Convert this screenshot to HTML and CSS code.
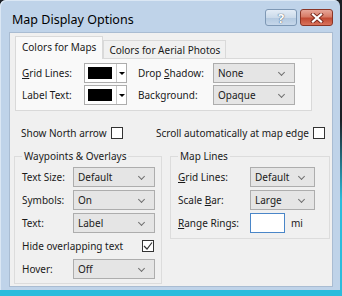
FILE: index.html
```html
<!DOCTYPE html>
<html lang="en">
<head>
  <meta charset="UTF-8">
  <title>Map Display Options</title>
  <link rel="stylesheet" href="styles.css">
</head>
<body>
  <div class="window">
    <!-- Caption bar -->
    <div class="titlebar">
      <span class="title">Map Display Options</span>
      <div class="caption-btns">
        <div class="cap-btn help">?</div>
        <div class="cap-btn close">
          <svg width="14" height="10" viewBox="0 0 14 10">
            <path d="M3 1.5 L11 8.5 M11 1.5 L3 8.5" stroke="#7a2a1e" stroke-width="4" stroke-linecap="square"/>
            <path d="M3 1.5 L11 8.5 M11 1.5 L3 8.5" stroke="#fff" stroke-width="2.2" stroke-linecap="square"/>
          </svg>
        </div>
      </div>
    </div>

    <div class="client">
      <!-- Tabs -->
      <div class="tabs">
        <div class="tab active">Colors for Maps</div>
        <div class="tab">Colors for Aerial Photos</div>
      </div>
      <div class="tabpanel">
        <span class="lbl"><u>G</u>rid Lines:</span>
        <div class="color-combo"><span class="swatch"></span><span class="tri"></span></div>
        <span class="lbl">Drop <u>S</u>hadow:</span>
        <div class="combo">None</div>

        <span class="lbl">Label Text:</span>
        <div class="color-combo"><span class="swatch"></span><span class="tri"></span></div>
        <span class="lbl">Background:</span>
        <div class="combo">Opaque</div>
      </div>

      <!-- Checkboxes -->
      <div class="checks-row">
        <label class="check">Show North arrow <span class="box"></span></label>
        <label class="check">Scroll automatically at map edge <span class="box"></span></label>
      </div>

      <!-- Group boxes -->
      <div class="groups">
        <fieldset class="group left">
          <legend>Waypoints &amp; Overlays</legend>
          <div class="row"><span class="lbl">Text Size:</span><div class="combo">Default</div></div>
          <div class="row"><span class="lbl">Symbols:</span><div class="combo">On</div></div>
          <div class="row"><span class="lbl">Text:</span><div class="combo">Label</div></div>
          <div class="row hide-row">
            <span class="lbl">Hide overlapping text</span>
            <span class="box">
              <svg width="10" height="10" viewBox="0 0 10 10"><path d="M1 5 L4 8 L9 1.5" fill="none" stroke="#333" stroke-width="1.2"/></svg>
            </span>
          </div>
          <div class="row"><span class="lbl">Hover:</span><div class="combo">Off</div></div>
        </fieldset>

        <fieldset class="group right">
          <legend>Map Lines</legend>
          <div class="row"><span class="lbl"><u>G</u>rid Lines:</span><div class="combo narrow">Default</div></div>
          <div class="row"><span class="lbl">Scale <u>B</u>ar:</span><div class="combo narrow">Large</div></div>
          <div class="row"><span class="lbl"><u>R</u>ange Rings:</span><div class="textbox"></div><span class="unit">mi</span></div>
        </fieldset>
      </div>
    </div>
  </div>
</body>
</html>
```

FILE: styles.css
```css
/* Dialog window */
* {
  box-sizing: border-box;
}
body {
  margin: 0;
  width: 342px;
  height: 296px;
  overflow: hidden;
  background: linear-gradient(180deg, #1b1f24 0, #1b1f24 120px, #2bbcdc 200px);
  font-family: "Noto Sans", sans-serif;
  font-size: 10px;
  color: #1a1a1a;
}
.window {
  width: 340px;
  height: 290px;
  padding: 0 7px 3px 9px;
  background: #bfd3e9;
  border-radius: 6px 6px 0 0;
  display: flex;
  flex-direction: column;
  box-shadow: inset 1px 1px 0 #dbe7f4;
}
.titlebar {
  height: 32px;
  flex: none;
  display: flex;
  align-items: flex-start;
  justify-content: space-between;
}
.title {
  margin: 11px 0 0 3px;
  font-size: 12.5px;
  color: #000;
}
.caption-btns {
  display: flex;
  gap: 3px;
  margin-top: 9px;
}
.cap-btn {
  height: 17px;
  border-radius: 3px;
  display: flex;
  align-items: center;
  justify-content: center;
}
.help {
  width: 32px;
  background: linear-gradient(180deg, #e3ecf6 0, #cbdaea 50%, #b2c8df 51%, #c6d7ea 100%);
  border: 1px solid #7e98b5;
  color: #fff;
  font-size: 13px;
  font-weight: bold;
  text-shadow: 0 0 1px #44566b, 0 0 1px #44566b;
}
.close {
  width: 33px;
  background: linear-gradient(180deg, #e7a799 0, #d77b66 45%, #c24a33 55%, #d9735b 100%);
  border: 1px solid #8a3526;
}

.client {
  flex: 1;
  background: #f0f0f0;
  border: 1px solid #a9bcd2;
  padding: 3px 0 0 5px;
}

/* Tabs */
.tabs {
  display: flex;
  align-items: flex-end;
  height: 22px;
}
.tab {
  height: 18px;
  padding: 0 5px;
  border: 1px solid #d9d9d9;
  border-bottom: none;
  background: #f0f0f0;
  display: flex;
  align-items: center;
}
.tab.active {
  height: 23px;
  padding: 0 6px 2px;
  background: #f9f9f9;
  margin-bottom: -1px;
  position: relative;
  z-index: 1;
}
.tabpanel {
  width: 297px;
  border: 1px solid #d9d9d9;
  background: #f9f9f9;
  padding: 4px 0 5px 6px;
  display: grid;
  grid-template-columns: 62px 54px 75px 82px;
  row-gap: 2px;
  align-items: center;
}
.lbl {
  white-space: nowrap;
}

/* Combo boxes */
.combo {
  position: relative;
  height: 20px;
  border: 1px solid #adadad;
  background: #e5e5e5;
  padding-left: 4px;
  display: flex;
  align-items: center;
}
.combo::after {
  content: "";
  position: absolute;
  right: 10px;
  top: 6px;
  width: 4px;
  height: 4px;
  border-right: 1px solid #707070;
  border-bottom: 1px solid #707070;
  transform: rotate(45deg);
}
.color-combo {
  width: 43px;
  height: 20px;
  border: 1px solid #adadad;
  background: #fff;
  display: flex;
  align-items: center;
}
.swatch {
  width: 25px;
  height: 12px;
  margin-left: 3px;
  background: #000;
}
.tri {
  margin-left: 4px;
  width: 10px;
  height: 18px;
  border-left: 1px solid #c8c8c8;
  position: relative;
}
.tri::after {
  content: "";
  position: absolute;
  left: 2px;
  top: 8px;
  border-left: 3px solid transparent;
  border-right: 3px solid transparent;
  border-top: 3px solid #000;
}

/* Checkboxes */
.checks-row {
  display: flex;
  justify-content: space-between;
  align-items: center;
  height: 18px;
  margin: 13px 7px 0 6px;
}
.check {
  display: flex;
  align-items: center;
  gap: 4px;
}
.box {
  width: 12px;
  height: 12px;
  border: 1px solid #333;
  background: #fff;
  display: inline-flex;
  align-items: center;
  justify-content: center;
}

/* Group boxes */
.groups {
  display: flex;
  align-items: flex-start;
  gap: 8px;
  margin: 7px 0 0 -1px;
}
.group {
  margin: 0;
  border: 1px solid #dcdcdc;
  padding: 3px 5px 4px 7px;
  display: flex;
  flex-direction: column;
  gap: 2px;
}
.group legend {
  padding: 0 2px;
  margin-left: 0;
}
.group.left {
  width: 148px;
}
.group.right {
  width: 160px;
  padding-bottom: 5px;
}
.row {
  display: flex;
  align-items: center;
  height: 21px;
}
.left .row .lbl { width: 51px; }
.left .row .combo { width: 82px; }
.left .hide-row .lbl { width: 120px; }
.right .row .lbl { width: 72px; }
.combo.narrow { width: 65px; }
.textbox {
  width: 35px;
  height: 20px;
  border: 1px solid #4a86c8;
  background: #fff;
}
.unit {
  margin-left: 6px;
}
```
